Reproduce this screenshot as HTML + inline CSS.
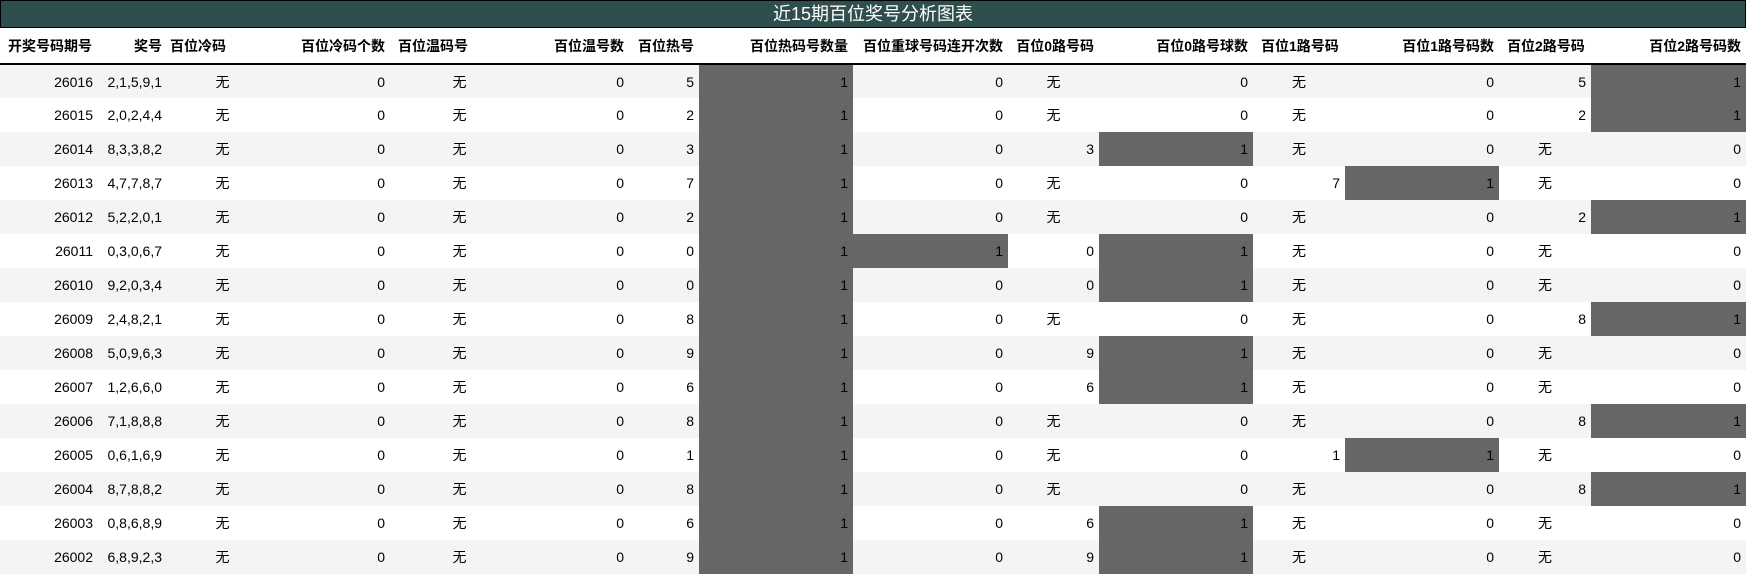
<!DOCTYPE html>
<html><head><meta charset="utf-8"><style>
body{margin:0;background:#fff;font-family:"Liberation Sans","Noto Sans CJK SC",sans-serif;font-size:14px;color:#000}
.t{background:#2f4f4f;border:1px solid #000;color:#fff;font-size:18px;text-align:center;line-height:26px;box-sizing:border-box;height:28px}
table{border-collapse:collapse;table-layout:fixed;width:1746px}
th{height:35px;font-weight:bold;padding:0 5px;border-bottom:2px solid #000;white-space:nowrap;text-align:right}
th.l{text-align:left;padding-left:3px}
td{height:34px;padding:0 5px;text-align:right;white-space:nowrap;box-sizing:border-box}
tr.o td{background:#f4f4f4}
td.c{text-align:center}
tr td.d{background:#666}
</style></head><body>
<div class="t">近15期百位奖号分析图表</div>
<table>
<colgroup><col style="width:98px"><col style="width:69px"><col style="width:111px"><col style="width:112px"><col style="width:139px"><col style="width:100px"><col style="width:70px"><col style="width:154px"><col style="width:155px"><col style="width:91px"><col style="width:154px"><col style="width:92px"><col style="width:154px"><col style="width:92px"><col style="width:155px"></colgroup>
<tr><th class="l" style="padding-left:8px">开奖号码期号</th><th>奖号</th><th class="l">百位冷码</th><th>百位冷码个数</th><th class="l" style="padding-left:8px">百位温码号</th><th>百位温号数</th><th>百位热号</th><th>百位热码号数量</th><th>百位重球号码连开次数</th><th>百位0路号码</th><th>百位0路号球数</th><th class="l" style="padding-left:8px">百位1路号码</th><th>百位1路号码数</th><th class="l" style="padding-left:8px">百位2路号码</th><th>百位2路号码数</th></tr>
<tr class="o"><td>26016</td><td>2,1,5,9,1</td><td class="c">无</td><td>0</td><td class="c">无</td><td>0</td><td>5</td><td class="d">1</td><td>0</td><td class="c">无</td><td>0</td><td class="c">无</td><td>0</td><td>5</td><td class="d">1</td></tr>
<tr><td>26015</td><td>2,0,2,4,4</td><td class="c">无</td><td>0</td><td class="c">无</td><td>0</td><td>2</td><td class="d">1</td><td>0</td><td class="c">无</td><td>0</td><td class="c">无</td><td>0</td><td>2</td><td class="d">1</td></tr>
<tr class="o"><td>26014</td><td>8,3,3,8,2</td><td class="c">无</td><td>0</td><td class="c">无</td><td>0</td><td>3</td><td class="d">1</td><td>0</td><td>3</td><td class="d">1</td><td class="c">无</td><td>0</td><td class="c">无</td><td>0</td></tr>
<tr><td>26013</td><td>4,7,7,8,7</td><td class="c">无</td><td>0</td><td class="c">无</td><td>0</td><td>7</td><td class="d">1</td><td>0</td><td class="c">无</td><td>0</td><td>7</td><td class="d">1</td><td class="c">无</td><td>0</td></tr>
<tr class="o"><td>26012</td><td>5,2,2,0,1</td><td class="c">无</td><td>0</td><td class="c">无</td><td>0</td><td>2</td><td class="d">1</td><td>0</td><td class="c">无</td><td>0</td><td class="c">无</td><td>0</td><td>2</td><td class="d">1</td></tr>
<tr><td>26011</td><td>0,3,0,6,7</td><td class="c">无</td><td>0</td><td class="c">无</td><td>0</td><td>0</td><td class="d">1</td><td class="d">1</td><td>0</td><td class="d">1</td><td class="c">无</td><td>0</td><td class="c">无</td><td>0</td></tr>
<tr class="o"><td>26010</td><td>9,2,0,3,4</td><td class="c">无</td><td>0</td><td class="c">无</td><td>0</td><td>0</td><td class="d">1</td><td>0</td><td>0</td><td class="d">1</td><td class="c">无</td><td>0</td><td class="c">无</td><td>0</td></tr>
<tr><td>26009</td><td>2,4,8,2,1</td><td class="c">无</td><td>0</td><td class="c">无</td><td>0</td><td>8</td><td class="d">1</td><td>0</td><td class="c">无</td><td>0</td><td class="c">无</td><td>0</td><td>8</td><td class="d">1</td></tr>
<tr class="o"><td>26008</td><td>5,0,9,6,3</td><td class="c">无</td><td>0</td><td class="c">无</td><td>0</td><td>9</td><td class="d">1</td><td>0</td><td>9</td><td class="d">1</td><td class="c">无</td><td>0</td><td class="c">无</td><td>0</td></tr>
<tr><td>26007</td><td>1,2,6,6,0</td><td class="c">无</td><td>0</td><td class="c">无</td><td>0</td><td>6</td><td class="d">1</td><td>0</td><td>6</td><td class="d">1</td><td class="c">无</td><td>0</td><td class="c">无</td><td>0</td></tr>
<tr class="o"><td>26006</td><td>7,1,8,8,8</td><td class="c">无</td><td>0</td><td class="c">无</td><td>0</td><td>8</td><td class="d">1</td><td>0</td><td class="c">无</td><td>0</td><td class="c">无</td><td>0</td><td>8</td><td class="d">1</td></tr>
<tr><td>26005</td><td>0,6,1,6,9</td><td class="c">无</td><td>0</td><td class="c">无</td><td>0</td><td>1</td><td class="d">1</td><td>0</td><td class="c">无</td><td>0</td><td>1</td><td class="d">1</td><td class="c">无</td><td>0</td></tr>
<tr class="o"><td>26004</td><td>8,7,8,8,2</td><td class="c">无</td><td>0</td><td class="c">无</td><td>0</td><td>8</td><td class="d">1</td><td>0</td><td class="c">无</td><td>0</td><td class="c">无</td><td>0</td><td>8</td><td class="d">1</td></tr>
<tr><td>26003</td><td>0,8,6,8,9</td><td class="c">无</td><td>0</td><td class="c">无</td><td>0</td><td>6</td><td class="d">1</td><td>0</td><td>6</td><td class="d">1</td><td class="c">无</td><td>0</td><td class="c">无</td><td>0</td></tr>
<tr class="o"><td>26002</td><td>6,8,9,2,3</td><td class="c">无</td><td>0</td><td class="c">无</td><td>0</td><td>9</td><td class="d">1</td><td>0</td><td>9</td><td class="d">1</td><td class="c">无</td><td>0</td><td class="c">无</td><td>0</td></tr>
</table>
</body></html>
